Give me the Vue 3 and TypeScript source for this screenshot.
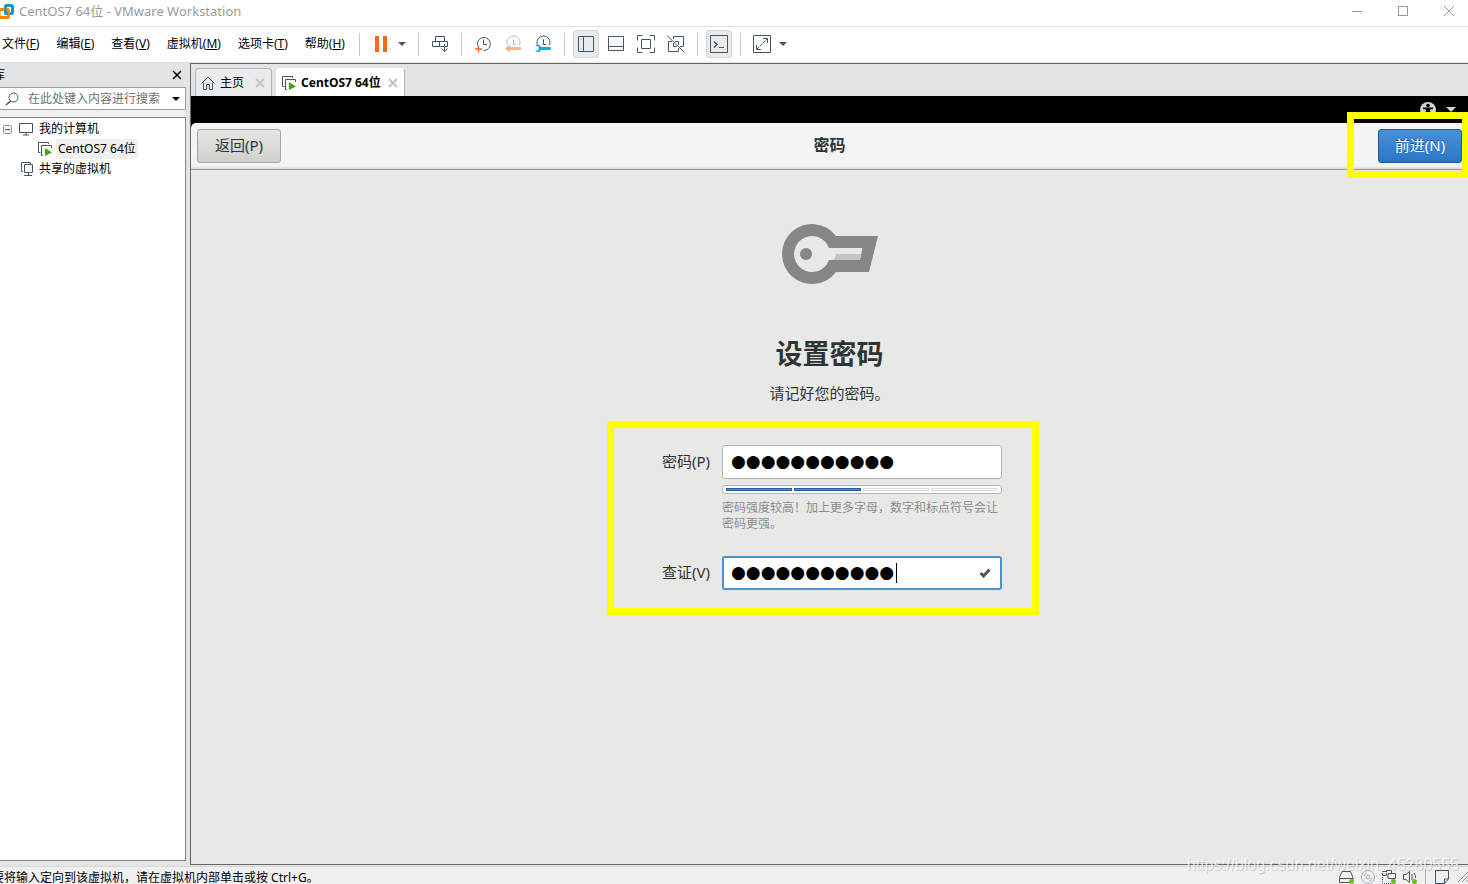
<script setup lang="ts">
import { ref } from 'vue'

interface MenuEntry {
  label: string
  key: string
}

const menus: MenuEntry[] = [
  { label: '文件', key: 'F' },
  { label: '编辑', key: 'E' },
  { label: '查看', key: 'V' },
  { label: '虚拟机', key: 'M' },
  { label: '选项卡', key: 'T' },
  { label: '帮助', key: 'H' },
]

const password = ref('●●●●●●●●●●●')
const verify = ref('●●●●●●●●●●●')
const search = ref('')
const strength = 2
</script>

<template>
  <div class="window">
    <header class="titlebar">
      <svg class="logo" width="15" height="18" viewBox="0 0 15 18" fill="none" stroke-width="3">
        <rect x="5.500" y="3.500" width="7" height="8" rx="1" stroke="#0f95d4" />
        <rect x="-1" y="7.500" width="9.500" height="8" rx="1" stroke="#f38b00" />
        <path d="M5.500 5V11.500H8" stroke="#0f95d4" stroke-width="2" />
      </svg>
      <span class="caption">CentOS7 64位 - VMware Workstation</span>
      <div class="winbtns">
        <button aria-label="最小化"><svg width="12" height="12" viewBox="0 0 12 12"><path d="M1 6.500H11" /></svg></button>
        <button aria-label="最大化"><svg width="12" height="12" viewBox="0 0 12 12"><rect x="1.500" y="1.500" width="9" height="9" /></svg></button>
        <button aria-label="关闭"><svg width="12" height="12" viewBox="0 0 12 12"><path d="M1 1L11 11M11 1L1 11" /></svg></button>
      </div>
    </header>

    <div class="menubar">
      <nav class="menus">
        <button v-for="m in menus" :key="m.key">{{ m.label }}(<u>{{ m.key }}</u>)</button>
      </nav>
      <div class="group pause">
        <button aria-label="挂起"><svg width="14" height="18" viewBox="0 0 14 18"><path d="M1 1H5V17H1ZM9 1H13V17H9Z" fill="#ff671b" /></svg></button>
        <button aria-label="电源选项"><svg width="8" height="4" viewBox="0 0 8 4"><path d="M0 0H8L4 4Z" fill="#435663" /></svg></button>
      </div>
      <div class="group">
        <button class="tool" aria-label="发送 Ctrl+Alt+Del">
          <svg class="ico" width="18" height="18" viewBox="0 0 18 18"><path d="M4.500 6.500V1.500H13.500V6.500M1.500 6.500H16.500V11.500H1.500ZM8.500 6.500V11.500M13.500 9V16M10.500 13.500L13.500 16.500L16.500 13.500" /></svg>
        </button>
      </div>
      <div class="group">
        <button class="tool" aria-label="拍摄快照">
          <svg class="ico" width="18" height="18" viewBox="0 0 18 18"><path d="M3.500 10.500A6.500 6.500 0 1 1 9.500 15.500M9.500 4.500V9.500H13" /><path d="M4.500 10.500V17.500M1 14H8" stroke="#ff671b" stroke-width="1.500" /></svg>
        </button>
        <button class="tool" aria-label="恢复快照">
          <svg class="ico" width="18" height="18" viewBox="0 0 18 18"><path d="M3.500 10A6.500 6.500 0 1 1 15.500 10M9.500 4.500V9.500H12" stroke="#b5bbc0" /><path d="M1 13.500L6 9.500V12H17V15H6V17.500Z" fill="#ffb28d" stroke="none" /></svg>
        </button>
        <button class="tool" aria-label="管理快照">
          <svg class="ico" width="18" height="18" viewBox="0 0 18 18"><path d="M3.500 10A6.500 6.500 0 1 1 15.500 10M9.500 4.500V9.500H12" /><path d="M1 11H4L5 13L4 15.500H1C3 18 6 17.500 7 15H16Q17 15 17 13.500T16 12H7C6 9.500 3 9 1 11Z" fill="#00b3d8" stroke="none" /></svg>
        </button>
      </div>
      <div class="group">
        <button class="tool on" aria-label="显示库">
          <svg class="ico" width="18" height="18" viewBox="0 0 18 18"><path d="M1.500 1.500H16.500V16.500H1.500ZM6.500 1.500V16.500" /></svg>
        </button>
        <button class="tool" aria-label="缩略图栏">
          <svg class="ico" width="18" height="18" viewBox="0 0 18 18"><path d="M1.500 1.500H16.500V15.500H1.500ZM1.500 11.500H16.500" /></svg>
        </button>
        <button class="tool" aria-label="全屏">
          <svg class="ico" width="18" height="18" viewBox="0 0 18 18"><path d="M.5 5.500V.5H5.500M12.500 .5H17.500V5.500M17.500 12.500V17.500H12.500M5.500 17.500H.5V12.500M4.500 4.500H13.500V13.500H4.500Z" /></svg>
        </button>
        <button class="tool" aria-label="Unity">
          <svg class="ico" width="18" height="18" viewBox="0 0 18 18"><path d="M6.500 4V1.500H16.500V11.500H13M11.500 13V16.500H1.500V6.500H5M8 6.500H11.500V10M6.500 8V11.500H10M0 .5L17.500 17.500" /></svg>
        </button>
      </div>
      <div class="group">
        <button class="tool on" aria-label="控制台视图">
          <svg class="ico" width="18" height="18" viewBox="0 0 18 18"><path d="M.5 .5H17.500V17.500H.5ZM9 12.500H14" /><path d="M4 6.500L7 9.500L4 12.500" stroke-width="1.500" /></svg>
        </button>
      </div>
      <div class="group stretch">
        <button class="tool" aria-label="自由拉伸">
          <svg class="ico" width="18" height="18" viewBox="0 0 18 18"><path d="M.5 .5H17.500V17.500H.5ZM10 3.500H14.500V8M3.500 10V14.500H8" /><path d="M4 14L14 4" stroke-dasharray="3 1" /></svg>
        </button>
        <button aria-label="拉伸选项"><svg width="8" height="4" viewBox="0 0 8 4"><path d="M0 0H8L4 4Z" fill="#435663" /></svg></button>
      </div>
    </div>

    <div class="body">
      <aside class="sidebar">
        <div class="libhead">
          <span class="libname">库</span>
          <button aria-label="关闭库"><svg width="10" height="10" viewBox="0 0 10 10"><path d="M1 1L9 9M9 1L1 9" stroke="#000" stroke-width="1.500" /></svg></button>
        </div>
        <div class="search">
          <svg class="ico" width="14" height="14" viewBox="0 0 14 14"><circle cx="8.500" cy="5.500" r="4.500" /><path d="M5.500 9L1 13" stroke-width="1.500" /></svg>
          <input v-model="search" aria-label="搜索" placeholder="在此处键入内容进行搜索" />
          <button aria-label="搜索选项"><svg width="8" height="4" viewBox="0 0 8 4"><path d="M0 0H8L4 4Z" /></svg></button>
        </div>
        <ul class="tree">
          <li>
            <svg class="fold" width="9" height="9" viewBox="0 0 9 9" fill="#f7f7f7"><rect x=".5" y=".5" width="8" height="8" rx="1" stroke="#919191" /><path d="M2 4.500H7" stroke="#3a55a3" /></svg>
            <svg class="ico" width="16" height="14" viewBox="0 0 16 14"><path d="M1.500 1.500H14.500V10.500H1.500ZM8 10.500V13M5 13H11" /></svg>
            <span>我的计算机</span>
          </li>
          <li class="child">
            <svg class="ico" width="16" height="16" viewBox="0 0 16 16"><path d="M3.500 11.500H1.500V1.500H11.500V3M6 14.500H4.500V4.500H14.500V7" /><path d="M8 7L15 11.500L8 15Z" fill="#43a317" stroke="none" /></svg>
            <span class="sel">CentOS7 64位</span>
          </li>
          <li class="shared">
            <svg class="ico" width="14" height="16" viewBox="0 0 14 16"><path d="M3 10.500H1.500V1.500H10.500V3M4.500 3.500H12.500V11.500H4.500ZM8.500 12V14.500M4 14.500H12" /></svg>
            <span>共享的虚拟机</span>
          </li>
        </ul>
      </aside>

      <main class="stage">
        <div class="tabs">
          <div class="tab">
            <svg class="ico" width="16" height="16" viewBox="0 0 16 16"><path d="M1.500 8.500L8 2L14.500 8.500M3.500 7.500V14.500H6.500V9.500H9.500V14.500H12.500V7.500" /></svg>
            <button class="tabname">主页</button>
            <button aria-label="关闭主页"><svg width="10" height="10" viewBox="0 0 10 10"><path d="M1 1L9 9M9 1L1 9" stroke="#c3c3c3" stroke-width="2" /></svg></button>
          </div>
          <div class="tab active">
            <svg class="ico" width="16" height="16" viewBox="0 0 16 16"><path d="M3.500 11.500H1.500V1.500H11.500V3M6 14.500H4.500V4.500H14.500V7" /><path d="M8 7L15 11.500L8 15Z" fill="#43a317" stroke="none" /></svg>
            <button class="tabname">CentOS7 64位</button>
            <button aria-label="关闭 CentOS7"><svg width="10" height="10" viewBox="0 0 10 10"><path d="M1 1L9 9M9 1L1 9" stroke="#c3c3c3" stroke-width="2" /></svg></button>
          </div>
        </div>

        <section class="guest">
          <div class="topbar">
            <svg width="16" height="16" viewBox="0 0 16 16"><circle cx="8" cy="8" r="8" fill="#d2d2d2" /><circle cx="8" cy="3.500" r="1.800" /><path d="M3 5.500H13V7L10 7.500L11 14H9L8 10L7 14H5L6 7.500L3 7Z" /></svg>
            <svg width="10" height="5" viewBox="0 0 10 5"><path d="M0 0H10L5 5Z" fill="#d2d2d2" /></svg>
          </div>
          <div class="headerbar">
            <button class="nav back">返回(P)</button>
            <h1>密码</h1>
            <button class="nav next">前进(N)</button>
          </div>
          <div class="frame frame-next"></div>
          <div class="page">
            <svg class="key" width="96" height="60" viewBox="0 0 96 60">
              <path fill="#838787" fill-rule="evenodd" d="M54 12H96L87 48H54A30 30 0 1 1 54 12ZM47 24A18 18 0 1 0 47 36H78L80.500 24Z" />
              <circle cx="24" cy="30" r="6" fill="#838787" />
              <path fill="#c2c5c4" d="M54 30H79L77.500 36H52Z" />
            </svg>
            <h2>设置密码</h2>
            <p class="hint">请记好您的密码。</p>
            <form class="form" @submit.prevent>
              <label for="pw">密码(P)</label>
              <input id="pw" v-model="password" class="field" type="text" autocomplete="off" />
              <div class="meter">
                <i v-for="n in 4" :key="n" :class="{ full: n <= strength }"></i>
              </div>
              <p class="advice">密码强度较高！加上更多字母，数字和标点符号会让密码更强。</p>
              <label for="pv">查证(V)</label>
              <div class="verify">
                <input id="pv" v-model="verify" class="field focus" type="text" autocomplete="off" />
                <span class="caret"></span>
                <svg class="tick" width="12" height="10" viewBox="0 0 12 10"><path d="M1.500 5L4.500 8L10.500 1.500" fill="none" stroke="#505556" stroke-width="3" /></svg>
              </div>
              <div class="frame frame-form"></div>
            </form>
          </div>
        </section>
      </main>
    </div>

    <footer class="status">
      <span class="msg">要将输入定向到该虚拟机，请在虚拟机内部单击或按 Ctrl+G。</span>
      <div class="devices">
        <svg class="ico" width="17" height="16" viewBox="0 0 17 16"><path d="M1.500 8.500L4 2.500H12.500L15 8.500V13.500H1.500ZM1.500 9.500H15" /><circle cx="13.500" cy="12.500" r="2.500" fill="#6cc11b" stroke="none" /></svg>
        <svg class="ico" width="16" height="16" viewBox="0 0 16 16" ><g stroke="#a9b2b8"><circle cx="8" cy="8" r="6.500" /><circle cx="8" cy="8" r="2" /><path d="M4 7A4 4 0 0 1 7 4M12 9A4 4 0 0 1 9 12" /></g></svg>
        <svg class="ico" width="16" height="16" viewBox="0 0 16 16"><path d="M5.500 6V1.500H10.500V4M5.500 6.500H1.500V2.500H5M7 4.500H14.500V9.500H7Z" /><path d="M1.500 8V14.500H10" stroke-dasharray="1 1" /><circle cx="12.500" cy="12.500" r="2.500" fill="#6cc11b" stroke="none" /></svg>
        <svg class="ico" width="16" height="16" viewBox="0 0 16 16"><path d="M1.500 5.500H4L7.500 2.500V13.500L4 10.500H1.500ZM10 5V11M12 4Q14 7 13.500 9" /><circle cx="12.500" cy="12.500" r="2.500" fill="#6cc11b" stroke="none" /></svg>
        <span class="sep"></span>
        <svg class="ico" width="16" height="16" viewBox="0 0 16 16"><path d="M1.500 1.500H14.500V10L10.500 14.500H1.500ZM14.500 10H10.500V14.500" /></svg>
        <svg class="grip" width="10" height="10" viewBox="0 0 10 10" fill="none" stroke="#929292"><path d="M0 10L10 0M4 10L10 4M8 10L10 8" /></svg>
      </div>
    </footer>
    <span class="watermark">https://blog.csdn.net/weixin_45280555</span>
  </div>
</template>

<style>
body {
  margin: 0;
}
</style>

<style scoped>
.window {
  position: relative;
  display: flex;
  flex-direction: column;
  height: 100vh;
  overflow: hidden;
  background: #f0f0f0;
  color: #000;
  font-family: "Noto Sans", "Noto Sans CJK SC", sans-serif;
  font-size: 12px;
  line-height: 16px;
}
svg {
  display: block;
  flex: none;
}
.ico {
  fill: none;
  stroke: #435663;
}
button {
  display: flex;
  align-items: center;
  justify-content: center;
  padding: 0;
  border: 0;
  background: none;
  color: inherit;
  font: inherit;
  white-space: nowrap;
}
h1, h2, p, ul {
  margin: 0;
  padding: 0;
}

.titlebar {
  display: flex;
  align-items: center;
  flex: none;
  height: 26px;
  padding-bottom: 4px;
  box-sizing: border-box;
  background: #fff;
}
.caption {
  flex: 1;
  margin-left: 4px;
  color: #999;
  font-size: 13px;
}
.winbtns {
  display: flex;
  margin-right: -4px;
}
.winbtns button {
  width: 46px;
}
.winbtns svg {
  fill: none;
  stroke: #999;
}

.menubar {
  display: flex;
  flex: none;
  height: 37px;
  border-top: 1px solid #e2e2e2;
  border-bottom: 1px solid #e2e2e2;
  box-sizing: border-box;
  background: #fff;
}
.menus {
  display: flex;
  flex: none;
  gap: 17px;
  width: 357px;
  padding: 0 0 2px 2px;
}
.group {
  display: flex;
  align-items: center;
  padding: 0 6px 2px;
  border-left: 1px solid transparent;
  border-image: linear-gradient(#fff 7px, #c8c8c8 7px, #c8c8c8 28px, #fff 28px) 1;
}
.pause {
  gap: 10px;
  padding: 0 12px 2px 14px;
}
.stretch {
  gap: 2px;
}
.tool {
  width: 30px;
  height: 30px;
}
.on {
  width: 26px;
  height: 28px;
  margin: 0 2px;
  border: 1px solid #d3d4d6;
  border-radius: 3px;
  background: #e9ebed;
}

.body {
  display: flex;
  flex: 1;
  min-height: 0;
  background: #e2e4e6;
}
.sidebar {
  display: flex;
  flex-direction: column;
  width: 186px;
  margin-right: 4px;
  padding-bottom: 5px;
  flex: none;
}
.libhead {
  display: flex;
  align-items: center;
  justify-content: space-between;
  height: 24px;
  padding-right: 4px;
}
.libname {
  margin-left: -7px;
}
.search {
  display: flex;
  align-items: center;
  height: 23px;
  padding: 0 5px;
  box-sizing: border-box;
  border: 1px solid #9a9ea1;
  border-left: 0;
  background: #fff;
}
.search input {
  flex: 1;
  min-width: 0;
  margin-left: 9px;
  padding: 0;
  border: 0;
  outline: 0;
  background: none;
  font: inherit;
}
.search input::placeholder {
  color: #707070;
}
.tree {
  flex: 1;
  margin-top: 7px;
  padding-top: 1px;
  list-style: none;
  border: 1px solid #828790;
  border-left: 0;
  background: #fff;
  box-shadow: 0 -7px 0 #f0f0f0;
}
.tree li {
  display: flex;
  align-items: center;
  height: 20px;
  padding-left: 3px;
  gap: 5px;
}
.fold {
  margin-right: 1px;
}
.tree .child {
  padding-left: 37px;
  gap: 3px;
}
.tree .shared {
  padding-left: 20px;
}
.sel {
  padding: 2px;
  background: #f0f0f0;
}

.stage {
  display: flex;
  flex: 1;
  flex-direction: column;
  min-width: 0;
  margin-bottom: 1px;
  border: 1px solid #666;
  border-right: 0;
}
.tabs {
  display: flex;
  align-items: flex-end;
  flex: none;
  gap: 4px;
  height: 32px;
  padding-left: 4px;
}
.tab {
  display: flex;
  align-items: center;
  height: 28px;
  padding: 0 6px 0 4px;
  gap: 4px;
  box-sizing: border-box;
  border: 1px solid #b1b3b5;
  border-bottom: 0;
  border-radius: 4px 4px 0 0;
  background: #e9ebed;
}
.tabname {
  margin-right: 7px;
}
.active {
  background: #fff;
  border-color: #fff #b1b3b5 #fff #fff;
  font-weight: 700;
}
.active .tabname {
  margin-right: 3px;
}

.guest {
  position: relative;
  display: flex;
  flex: 1;
  flex-direction: column;
  min-height: 0;
  background: #000;
  color: #2e3436;
  font-size: 15px;
  line-height: 20px;
}
.topbar {
  display: flex;
  align-items: center;
  justify-content: flex-end;
  flex: none;
  gap: 10px;
  height: 27px;
  padding-right: 12px;
  box-sizing: border-box;
}
.headerbar {
  display: flex;
  align-items: center;
  justify-content: space-between;
  flex: none;
  height: 47px;
  padding: 0 6px;
  box-sizing: border-box;
  border-bottom: 1px solid #959790;
  border-radius: 5px 0 0 0;
  background: linear-gradient(#f5f5f5, #f3f3f3 43px, #d8d8d6);
}
.headerbar h1 {
  padding-bottom: 2px;
  font-size: 16px;
  font-weight: 700;
}
.nav {
  width: 84px;
  height: 34px;
  padding-bottom: 2px;
  box-sizing: border-box;
  border: 1px solid #a7a7a2;
  border-radius: 3px;
  background: linear-gradient(#e6e6e4, #cfcfcd);
}
.next {
  border-color: #1f5b9c;
  background: linear-gradient(#4a90d9, #2a76c6);
  color: #fff;
  text-shadow: 0 -1px #1c5187;
}
.page {
  display: flex;
  flex: 1;
  flex-direction: column;
  align-items: center;
  min-height: 0;
  padding-top: 54px;
  background: #e8e8e6;
}
.page h2 {
  margin-top: 50px;
  font-size: 27px;
  line-height: 40px;
}
.hint {
  margin-top: 9px;
}
.form {
  position: relative;
  display: grid;
  grid-template-columns: 53px 280px;
  column-gap: 12px;
  margin-top: 42px;
}
.form label {
  align-self: center;
  justify-self: end;
  padding-bottom: 2px;
  white-space: nowrap;
}
.field {
  width: 280px;
  height: 34px;
  padding: 0 8px 2px;
  box-sizing: border-box;
  border: 1px solid #b4b4b1;
  border-radius: 3px;
  outline: 0;
  background: #fff;
  color: #000;
  font: 17px "DejaVu Sans", sans-serif;
}
.focus {
  display: block;
  padding: 0 7px 2px;
  border: 2px solid #4a90d9;
}
.meter {
  display: flex;
  grid-column: 2;
  gap: 2px;
  height: 9px;
  margin-top: 6px;
  padding: 2px 4px 2px 3px;
  box-sizing: border-box;
  border: 1px solid #b4b4b1;
  border-radius: 3px;
  background: #fff;
}
.meter i {
  flex: 1;
  box-sizing: border-box;
  border: 1px solid #d9d9de;
}
.meter .full {
  border-color: #215d9c;
  background: #4a90d9;
}
.advice {
  grid-column: 2;
  margin: 6px 0 24px;
  color: #8b8e8f;
  font-size: 12px;
  line-height: 16px;
}
.verify {
  position: relative;
}
.caret {
  position: absolute;
  top: 7px;
  left: 174px;
  width: 1px;
  height: 20px;
  background: #000;
}
.tick {
  position: absolute;
  top: 12px;
  right: 11px;
}
.frame {
  position: absolute;
  border: 7px solid #ff0;
  box-sizing: border-box;
  pointer-events: none;
}
.frame-next {
  top: 16px;
  right: 0;
  width: 121px;
  height: 66px;
  border-right-width: 6px;
}
.frame-form {
  inset: -24px -37px -25px -50px;
}

.status {
  display: flex;
  align-items: center;
  justify-content: space-between;
  flex: none;
  height: 18px;
  box-sizing: border-box;
  border-top: 1px solid #d9d9d9;
  background: #f0f0f0;
}
.msg {
  margin-left: -8px;
  padding-top: 4px;
  white-space: nowrap;
}
.devices {
  display: flex;
  align-items: center;
  gap: 5px;
  padding-top: 2px;
}
.sep {
  width: 1px;
  height: 16px;
  margin: 0 3px 0 2px;
  background: #aaa;
}
.grip {
  margin-left: 3px;
}
.watermark {
  position: absolute;
  right: 9px;
  bottom: 9px;
  color: rgba(255, 255, 255, .75);
  font: 16px/20px "Liberation Sans", sans-serif;
  text-shadow: 1px 1px 1px rgba(0, 0, 0, .18);
}
</style>
